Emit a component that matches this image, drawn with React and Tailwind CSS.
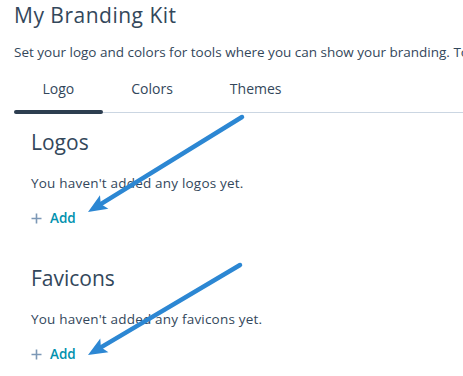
import React from "react";

const tabs = ["Logo", "Colors", "Themes"];

function Arrow({ x1, y1, x2, y2 }) {
  const dx = x2 - x1;
  const dy = y2 - y1;
  const len = Math.hypot(dx, dy);
  const ux = dx / len;
  const uy = dy / len;
  const head = 19;
  const half = 8;
  const bx = x2 - ux * head;
  const by = y2 - uy * head;
  const px = -uy;
  const py = ux;
  const pts = [
    [x2, y2],
    [bx + px * half, by + py * half],
    [bx + ux * 4, by + uy * 4],
    [bx - px * half, by - py * half],
  ]
    .map((p) => p.join(","))
    .join(" ");
  return (
    <g>
      <line x1={x1} y1={y1} x2={bx + ux * 5} y2={by + uy * 5} stroke="#2c87d3" strokeWidth="4.5" strokeLinecap="round" />
      <polygon points={pts} fill="#2c87d3" />
    </g>
  );
}

function Section({ title, empty }) {
  return (
    <div>
      <h3 className="text-[21px] leading-[28px] text-[#33475b]">{title}</h3>
      <p className="mt-[18px] text-[13.5px] leading-[18px] tracking-[0.2px] text-[#33475b]">{empty}</p>
      <button className="mt-[17px] flex items-center gap-[8px] text-[13.5px] leading-[18px] font-semibold text-[#0091ae]">
        <svg width="11" height="11" viewBox="0 0 11 11">
          <path d="M5.5 0.5v10M0.5 5.5h10" stroke="#7c98b6" strokeWidth="1.6" />
        </svg>
        Add
      </button>
    </div>
  );
}

export default function App() {
  return (
    <div className="relative w-[463px] h-[376px] overflow-hidden bg-white font-['Open_Sans',sans-serif]">
      <div className="pl-[14px] pt-[2px]">
        <h1 className="text-[21px] leading-[26px] tracking-[0.5px] text-[#33475b]">My Branding Kit</h1>
        <p className="mt-[15px] whitespace-nowrap text-[13.5px] leading-[18px] text-[#33475b]">
          Set your logo and colors for tools where you can show your branding. To use these settings
        </p>
        <div className="mt-[18px] flex">
          {tabs.map((t) => (
            <div key={t} className="px-[28.5px] pb-[11px] text-[14px] leading-[20px] text-[#33475b]">
              {t}
            </div>
          ))}
        </div>
        <div className="relative h-[4px]">
          <div className="absolute left-0 right-0 top-[1.5px] h-px bg-[#cbd6e2]" />
          <div className="absolute left-0 top-0 h-[4px] w-[89px] rounded-full bg-[#2d3e50]" />
        </div>
      </div>
      <div className="pl-[31px] pt-[14px] flex flex-col gap-[37px]">
        <Section title="Logos" empty="You haven't added any logos yet." />
        <Section title="Favicons" empty="You haven't added any favicons yet." />
      </div>
      <svg className="pointer-events-none absolute inset-0" width="463" height="376">
        <Arrow x1={242} y1={117} x2={88} y2={212} />
        <Arrow x1={240} y1={265} x2={88} y2={355} />
      </svg>
    </div>
  );
}
